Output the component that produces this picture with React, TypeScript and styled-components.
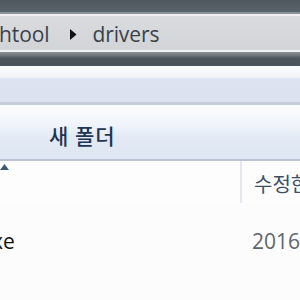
import React from "react";
import styled, { createGlobalStyle } from "styled-components";

const Global = createGlobalStyle`
  html, body { margin: 0; padding: 0; background: #fcfcfc; }
  body { width: 300px; height: 300px; overflow: hidden; font-family: "Open Sans", "Noto Sans CJK KR", sans-serif; }
`;

const Window = styled.div`
  width: 300px;
  height: 300px;
  display: flex;
  flex-direction: column;
  overflow: hidden;
  background: #fcfcfc;
`;

const TopBand = styled.div`
  height: 12px;
  background: linear-gradient(#4f575f, #5a626b);
  border-bottom: 2px solid #8a9199;
`;

const AddressBar = styled.div`
  height: 34px;
  border-top: 2px solid #eef0f2;
  border-bottom: 2px solid #eef0f2;
  background: linear-gradient(#d9dbdd, #d2d4d7);
  display: flex;
  align-items: center;
  gap: 13px;
  margin-left: -1px;
`;

const Crumb = styled.span`
  font-size: 21px;
  color: #3a424b;
  letter-spacing: -0.1px;
  line-height: 1;
  padding-top: 3px;
`;

const Arrow = styled.svg`
  width: 8px;
  height: 11px;
  margin: 2px 2px 0 7px;
`;

const LowerBand = styled.div`
  height: 14px;
  background: linear-gradient(#8a9199 0%, #6b737b 25%, #4c545c 45%, #4b535b 100%);
`;

const MenuArea = styled.div`
  height: 36px;
  background: linear-gradient(#fbfcfe 0%, #f2f4fa 30%, #dee3f0 36%, #dce2ef 100%);
  border-bottom: 3px solid #c6cddb;
`;

const CommandBar = styled.div`
  height: 54px;
  background: linear-gradient(#fbfcfe 0%, #f1f5fb 35%, #e3eaf5 60%, #dde6f2 100%);
  border-bottom: 2px solid #b8c4d4;
  display: flex;
  align-items: center;
  padding-left: 49px;
`;

const CommandText = styled.span`
  font-family: "Noto Sans CJK KR", sans-serif;
  font-size: 21px;
  font-weight: 500;
  color: #1e3553;
  letter-spacing: 1px;
  padding-top: 5px;
`;

const HeaderRow = styled.div`
  display: grid;
  grid-template-columns: 240px 1fr;
  height: 42px;
  background: #fdfdfd;
`;

const HeaderCell = styled.div<{ $sep?: boolean }>`
  position: relative;
  border-left: ${(p) => (p.$sep ? "2px solid #e4e8ee" : "none")};
  padding-left: 12px;
  padding-top: 8px;
  font-family: "Noto Sans CJK KR", sans-serif;
  font-size: 20px;
  color: #3e4f66;
  white-space: nowrap;
  overflow: hidden;
`;

const SortArrow = styled.svg`
  position: absolute;
  left: 0;
  top: 3px;
  width: 9px;
  height: 6px;
`;

const FileRow = styled.div`
  display: grid;
  grid-template-columns: 240px 1fr;
  align-items: center;
  height: 36px;
  margin-top: 20px;
  overflow: hidden;
`;

const NameCell = styled.div`
  font-family: "Open Sans", sans-serif;
  font-size: 21px;
  color: #111;
  margin-left: -8px;
  white-space: nowrap;
`;

const DateCell = styled.div`
  font-family: "Open Sans", sans-serif;
  font-size: 21px;
  color: #5e6670;
  padding-left: 12px;
  white-space: nowrap;
  overflow: hidden;
`;

export default function App() {
  return (
    <>
      <Global />
      <Window>
        <TopBand />
        <AddressBar>
          <Crumb>htool</Crumb>
          <Arrow viewBox="0 0 8 11">
            <path d="M1 0 L7.5 5.5 L1 11 Z" fill="#111" />
          </Arrow>
          <Crumb>drivers</Crumb>
        </AddressBar>
        <LowerBand />
        <MenuArea />
        <CommandBar>
          <CommandText>새 폴더</CommandText>
        </CommandBar>
        <HeaderRow>
          <HeaderCell>
            <SortArrow viewBox="0 0 9 6">
              <path d="M0 6 L4.5 0 L9 6 Z" fill="#3d5a7a" />
            </SortArrow>
          </HeaderCell>
          <HeaderCell $sep>수정한 날짜</HeaderCell>
        </HeaderRow>
        <FileRow>
          <NameCell>xe</NameCell>
          <DateCell>2016-03-01 오후</DateCell>
        </FileRow>
      </Window>
    </>
  );
}
